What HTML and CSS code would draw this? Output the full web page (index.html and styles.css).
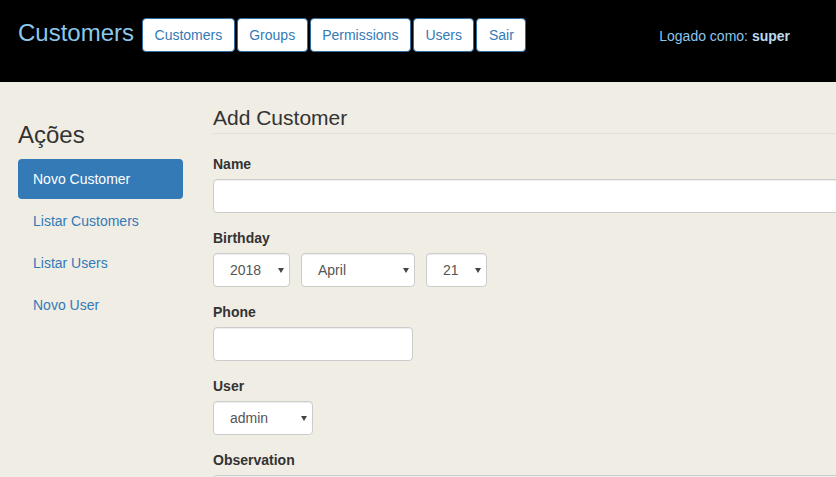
FILE: index.html
```html
<!DOCTYPE html>
<html lang="pt">
<head>
<meta charset="utf-8">
<title>Customers</title>
<link rel="stylesheet" href="styles.css">
</head>
<body>
<header class="topbar">
  <a class="brand" href="#">Customers</a>
  <nav class="topnav">
    <a class="btn" href="#">Customers</a>
    <a class="btn" href="#">Groups</a>
    <a class="btn" href="#">Permissions</a>
    <a class="btn" href="#">Users</a>
    <a class="btn" href="#">Sair</a>
  </nav>
  <div class="logged">Logado como: <strong>super</strong></div>
</header>
<div class="page">
  <aside class="sidebar">
    <h3 class="side-title">Ações</h3>
    <ul class="pills">
      <li><a class="pill active" href="#">Novo Customer</a></li>
      <li><a class="pill" href="#">Listar Customers</a></li>
      <li><a class="pill" href="#">Listar Users</a></li>
      <li><a class="pill" href="#">Novo User</a></li>
    </ul>
  </aside>
  <main class="content">
    <form class="form">
      <fieldset class="fieldset">
        <legend class="legend">Add Customer</legend>
        <div class="group">
          <label class="label" for="name">Name</label>
          <input class="control" id="name" type="text">
        </div>
        <div class="group">
          <label class="label">Birthday</label>
          <div class="date-row">
            <span class="sel sel-year"><select class="select"><option>2018</option></select></span>
            <span class="sel sel-month"><select class="select"><option>April</option></select></span>
            <span class="sel sel-day"><select class="select"><option>21</option></select></span>
          </div>
        </div>
        <div class="group">
          <label class="label" for="phone">Phone</label>
          <input class="control control-phone" id="phone" type="text">
        </div>
        <div class="group">
          <label class="label">User</label>
          <div>
            <span class="sel sel-user"><select class="select"><option>admin</option></select></span>
          </div>
        </div>
        <div class="group">
          <label class="label" for="obs">Observation</label>
          <textarea class="control control-area" id="obs"></textarea>
        </div>
      </fieldset>
    </form>
  </main>
</div>
</body>
</html>
```
FILE: styles.css
```css
* { box-sizing: border-box; }
html, body { margin: 0; padding: 0; }
body {
  font-family: "Liberation Sans", Arial, sans-serif;
  font-size: 14px;
  line-height: 20px;
  color: #333;
  background: #f0ede5;
  overflow: hidden;
  height: 477px;
}
.topbar {
  background: #000;
  height: 82px;
  display: flex;
  align-items: flex-start;
  padding: 0 46px 0 18px;
}
.brand {
  color: #8cc8eb;
  font-size: 24px;
  line-height: 26px;
  text-decoration: none;
  margin-top: 20px;
}
.topnav {
  display: flex;
  gap: 2px;
  margin-left: 8px;
  margin-top: 18px;
}
.btn {
  display: inline-block;
  background: #fff;
  color: #337ab7;
  border: 1px solid #2e6da4;
  border-radius: 4px;
  padding: 6px 11.5px;
  font-size: 14px;
  line-height: 20px;
  text-decoration: none;
}
.logged {
  margin-left: auto;
  margin-top: 26px;
  color: #8cc6ea;
}
.logged strong { color: #bcdaee; font-weight: bold; }

.page {
  display: flex;
  padding: 21px 0 0 18px;
  width: 1200px;
}
.sidebar {
  width: 165px;
  flex: none;
}
.side-title {
  font-size: 24px;
  font-weight: 500;
  line-height: 26px;
  margin: 19px 0 11px;
  color: #333;
}
.pills {
  list-style: none;
  margin: 0;
  padding: 0;
}
.pills li + li { margin-top: 2px; }
.pill {
  display: block;
  padding: 10px 15px;
  border-radius: 4px;
  color: #337ab7;
  text-decoration: none;
}
.pill.active {
  background: #337ab7;
  color: #fff;
}
.content {
  margin-left: 30px;
  width: 780px;
  flex: none;
}
.form { margin: 0; }
.fieldset { border: 0; margin: 0; padding: 0; min-width: 0; }
.legend {
  display: block;
  width: 100%;
  padding: 0;
  font-size: 21px;
  line-height: 30px;
  color: #333;
  border-bottom: 1px solid #e2e0da;
  margin-bottom: 20px;
}
.group { margin-bottom: 15px; }
.label {
  display: inline-block;
  font-weight: bold;
  margin-bottom: 5px;
}
.control {
  display: block;
  width: 100%;
  height: 34px;
  padding: 6px 12px;
  font: inherit;
  color: #555;
  background: #fff;
  border: 1px solid #ccc;
  border-radius: 4px;
  box-shadow: inset 0 1px 1px rgba(0,0,0,.075);
}
.control-phone { width: 200px; }
.control-area { height: 80px; resize: none; }
.date-row { display: flex; gap: 11px; }
.sel {
  position: relative;
  display: inline-block;
  height: 34px;
}
.sel::after {
  content: "";
  position: absolute;
  right: 6px;
  top: 15px;
  border-left: 3.5px solid transparent;
  border-right: 3.5px solid transparent;
  border-top: 5px solid #444;
}
.select {
  -webkit-appearance: none;
  appearance: none;
  display: block;
  width: 100%;
  height: 34px;
  padding: 0 0 0 16px;
  font: inherit;
  color: #555;
  background: #fff;
  border: 1px solid #ccc;
  border-radius: 4px;
  box-shadow: inset 0 1px 1px rgba(0,0,0,.075);
}
.sel-year { width: 77px; }
.sel-month { width: 114px; }
.sel-day { width: 61px; }
.sel-user { width: 100px; }
```
